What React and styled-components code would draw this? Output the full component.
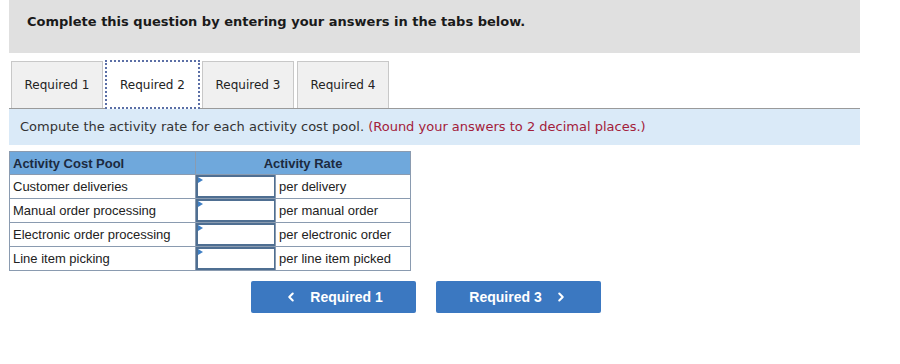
import React from 'react';
import styled, { createGlobalStyle } from 'styled-components';
import { ChevronLeft, ChevronRight } from 'lucide-react';

const GlobalStyle = createGlobalStyle`
  body {
    margin: 0;
    background: #ffffff;
    font-family: "DejaVu Sans", Verdana, sans-serif;
  }
`;

const rows = [
  { pool: 'Customer deliveries', unit: 'per delivery' },
  { pool: 'Manual order processing', unit: 'per manual order' },
  { pool: 'Electronic order processing', unit: 'per electronic order' },
  { pool: 'Line item picking', unit: 'per line item picked' },
];

const tabs = ['Required 1', 'Required 2', 'Required 3', 'Required 4'];

function App() {
  return (
    <Page>
      <GlobalStyle />
      <Banner>Complete this question by entering your answers in the tabs below.</Banner>

      <TabBar>
        {tabs.map((t, i) => (
          <Tab key={t} $active={i === 1}>{t}</Tab>
        ))}
      </TabBar>

      <Instruction>
        Compute the activity rate for each activity cost pool.{' '}
        <Hint>(Round your answers to 2 decimal places.)</Hint>
      </Instruction>

      <Table>
        <colgroup>
          <col style={{ width: 186 }} />
          <col style={{ width: 80 }} />
          <col style={{ width: 135 }} />
        </colgroup>
        <thead>
          <tr>
            <HeadCell $align="left">Activity Cost Pool</HeadCell>
            <HeadCell colSpan={2}>Activity Rate</HeadCell>
          </tr>
        </thead>
        <tbody>
          {rows.map((r) => (
            <tr key={r.pool}>
              <Cell>{r.pool}</Cell>
              <InputCell>
                <Entry />
              </InputCell>
              <Cell>{r.unit}</Cell>
            </tr>
          ))}
        </tbody>
      </Table>

      <Nav>
        <NavButton>
          <ChevronLeft size={14} strokeWidth={3.5} />
          Required 1
        </NavButton>
        <NavButton>
          Required 3
          <ChevronRight size={14} strokeWidth={3.5} />
        </NavButton>
      </Nav>
    </Page>
  );
}

export default App;

const Page = styled.div`
  width: 851px;
  margin-left: 9px;
  padding-bottom: 40px;
`;

const Banner = styled.div`
  background: #e0e0e0;
  height: 53px;
  box-sizing: border-box;
  padding: 13px 0 0 18px;
  font-size: 13px;
  font-weight: bold;
  line-height: 18px;
  color: #1a1a1a;
`;

const TabBar = styled.div`
  display: flex;
  gap: 2px;
  margin-top: 8px;
  padding-left: 2px;
  border-bottom: 1px solid #9a9a9a;
  height: 47px;
`;

const Tab = styled.div`
  display: flex;
  align-items: center;
  justify-content: center;
  box-sizing: border-box;
  width: ${(p) => (p.$active ? '95px' : '92px')};
  height: ${(p) => (p.$active ? '49px' : '47px')};
  margin-top: ${(p) => (p.$active ? '-1px' : '0')};
  font-size: 12px;
  color: #222;
  background: ${(p) => (p.$active ? '#ffffff' : '#f0f0f0')};
  border: ${(p) => (p.$active ? '2px dotted #5b6fa6' : '1px solid #c8c8c8')};
  border-bottom: ${(p) => (p.$active ? '2px dotted #5b6fa6' : 'none')};
  position: relative;
  z-index: ${(p) => (p.$active ? 1 : 0)};
  &:nth-child(4) {
    margin-left: 1px;
  }
`;

const Instruction = styled.div`
  background: #daeaf8;
  height: 36px;
  box-sizing: border-box;
  padding: 10px 0 0 11px;
  font-size: 13px;
  line-height: 16px;
  color: #333;
`;

const Hint = styled.span`
  color: #a3203a;
`;

const Table = styled.table`
  margin-top: 6px;
  border-collapse: collapse;
  table-layout: fixed;
  width: 401px;
  font-family: "Liberation Sans", Arial, sans-serif;
  font-size: 13px;
  color: #222;
  border: 1px solid #8a9bb0;
`;

const HeadCell = styled.th`
  background: #6fa8dc;
  height: 22px;
  padding: 0 3px;
  text-align: ${(p) => p.$align || 'center'};
  font-weight: bold;
  font-size: 13px;
  color: #1c2a3f;
  border: 1px solid #8a9bb0;
`;

const Cell = styled.td`
  height: 23px;
  padding: 0 3px;
  border: 1px solid #8a9bb0;
  white-space: nowrap;
  overflow: hidden;
`;

const InputCell = styled.td`
  padding: 0;
  border: 1px solid #8a9bb0;
`;

const Entry = styled.div`
  box-sizing: border-box;
  height: 23px;
  width: 79px;
  border: 2px solid #4f6f92;
  border-right-width: 1px;
  background: #fff;
  position: relative;
  &::before {
    content: '';
    position: absolute;
    top: 0;
    left: 0;
    border-top: 3px solid transparent;
    border-bottom: 3px solid transparent;
    border-left: 5px solid #3f7fc4;
  }
`;

const Nav = styled.div`
  display: flex;
  gap: 20px;
  margin-top: 10px;
  padding-left: 242px;
`;

const NavButton = styled.button`
  display: flex;
  align-items: center;
  justify-content: center;
  gap: 12px;
  width: 165px;
  height: 32px;
  background: #3b78c1;
  border: none;
  border-radius: 2px;
  color: #fff;
  font-family: "Liberation Sans", Arial, sans-serif;
  font-size: 14px;
  font-weight: bold;
  cursor: pointer;
`;
